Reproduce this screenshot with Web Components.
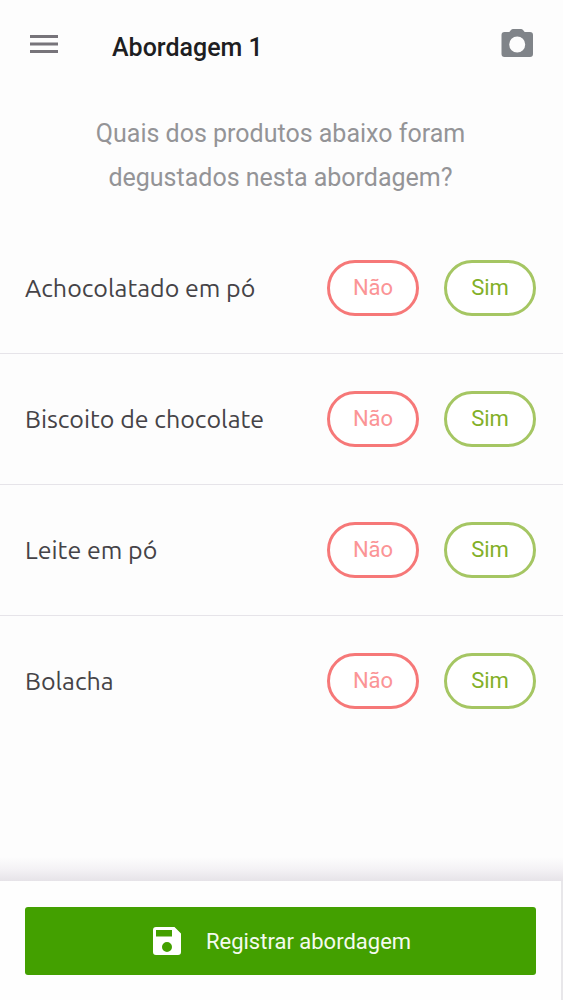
<!DOCTYPE html>
<html lang="pt-BR">
<head>
<meta charset="utf-8">
<meta name="viewport" content="width=device-width, initial-scale=1">
<title>Abordagem 1</title>
<style>
  body { margin: 0; background: #fdfdfd; font-family: Roboto, "Liberation Sans", sans-serif; }
</style>
</head>
<body>
<survey-screen></survey-screen>

<template id="survey-screen">
  <style>
    :host { display: flex; flex-direction: column; min-height: 100vh; }
    main { flex: 1; }
    h2 { margin: 0 auto; max-width: 400px; padding: 18px 2px 23px 0; font-size: 25px; font-weight: 400; line-height: 44px; text-align: center; color: #949497; }
  </style>
  <app-header>Abordagem 1</app-header>
  <main>
    <h2>Quais dos produtos abaixo foram degustados nesta abordagem?</h2>
    <product-row>Achocolatado em pó</product-row>
    <product-row>Biscoito de chocolate</product-row>
    <product-row>Leite em pó</product-row>
    <product-row>Bolacha</product-row>
  </main>
  <save-bar>Registrar abordagem</save-bar>
</template>

<template id="app-header">
  <style>
    :host { display: block; }
    header { display: flex; align-items: center; box-sizing: border-box; height: 94px; padding: 2px 27px 0 26px; }
    button { display: flex; padding: 0; border: 0; background: none; cursor: pointer; margin-bottom: 9px; }
    h1 { flex: 1; margin: 0 0 0 50px; font-size: 25px; font-weight: 500; line-height: 32px; color: #1e1e22; }
    svg { display: block; }
  </style>
  <header>
    <button type="button" aria-label="Menu">
      <svg width="36" height="36" viewBox="0 0 36 36" fill="#77747a"><path d="M4 9h28v3H4zM4 16.500h28v3H4zM4 24h28v3H4z"/></svg>
    </button>
    <h1><slot></slot></h1>
    <button type="button" aria-label="Câmera">
      <svg width="38" height="38" viewBox="0 0 38 38" fill="#808489"><path fill-rule="evenodd" d="M15 4h8q1.200 0 2 1l1.700 2H32a3 3 0 0 1 3 3v19a3 3 0 0 1-3 3H6.500a3 3 0 0 1-3-3V10a3 3 0 0 1 3-3h4.800L13 5q.8-1 2-1zM19.200 11.500a8 8 0 1 0 0 16a8 8 0 1 0 0-16z"/></svg>
    </button>
  </header>
</template>

<template id="product-row">
  <style>
    :host { display: flex; align-items: center; gap: 25px; box-sizing: border-box; min-height: 131px; padding: 0 27px 0 25px; border-bottom: 1px solid #e6e4e9; }
    :host(:last-of-type) { border-bottom-color: transparent; }
    span { flex: 1; font-family: Ubuntu, "Noto Sans", sans-serif; font-size: 25px; line-height: 32px; color: #454347; }
  </style>
  <span><slot></slot></span>
  <answer-button tone="no">Não</answer-button>
  <answer-button tone="yes">Sim</answer-button>
</template>

<template id="answer-button">
  <style>
    :host { display: block; --line: #f67878; --ink: #fb9496; }
    :host([tone="yes"]) { --line: #a5c663; --ink: #82b027; }
    button { display: block; box-sizing: border-box; width: 92px; height: 56px; padding: 0; border: 3px solid var(--line); border-radius: 28px; background: #fff; color: var(--ink); font: 400 22px/32px Roboto, sans-serif; cursor: pointer; }
  </style>
  <button type="button"><slot></slot></button>
</template>

<template id="save-bar">
  <style>
    :host { display: block; }
    .shade { height: 24px; margin-top: -24px; background: linear-gradient(#e6e3e800, #f4f2f5 50%, #e6e3e8); }
    footer { padding: 26px 25px 25px 25px; background: #fefefe; border-right: 2px solid #e8e7ea; }
    button { display: flex; align-items: center; justify-content: center; gap: 22px; width: 100%; height: 68px; padding: 2px 0 0; border: 0; border-radius: 3px; background: #43a000; color: #f4fbef; font: 400 22px/32px Roboto, sans-serif; cursor: pointer; }
    svg { display: block; }
  </style>
  <div class="shade"></div>
  <footer>
    <button type="button">
      <svg width="34" height="34" viewBox="0 0 34 34" fill="#fff" aria-hidden="true"><path fill-rule="evenodd" d="M6 2h18.500l6.500 6.500v18.500a3 3 0 0 1-3 3H6a3 3 0 0 1-3-3V5a3 3 0 0 1 3-3zM6 5v6.500h16V5zM17 17a5 5 0 1 0 0 10a5 5 0 1 0 0-10z"/></svg>
      <slot></slot>
    </button>
  </footer>
</template>

<script>
  class TemplateElement extends HTMLElement {
    constructor() {
      super();
      const template = document.getElementById(this.localName);
      this.attachShadow({ mode: "open" }).append(template.content.cloneNode(true));
    }
  }
  class AnswerButton extends TemplateElement {
    connectedCallback() {
      const button = this.shadowRoot.querySelector("button");
      button.setAttribute("aria-pressed", "false");
      button.onclick = () => button.setAttribute("aria-pressed", String(button.getAttribute("aria-pressed") !== "true"));
    }
  }
  customElements.define("answer-button", AnswerButton);
  customElements.define("product-row", class extends TemplateElement {});
  customElements.define("app-header", class extends TemplateElement {});
  customElements.define("save-bar", class extends TemplateElement {});
  customElements.define("survey-screen", class extends TemplateElement {});
</script>
</body>
</html>
